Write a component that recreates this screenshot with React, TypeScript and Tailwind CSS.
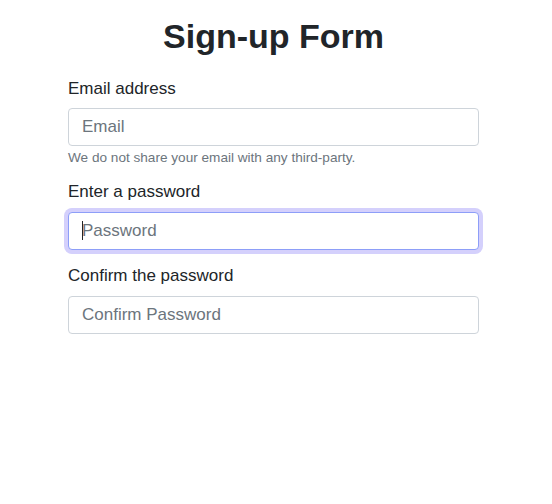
export default function App() {
  const font = { fontFamily: '"Liberation Sans", Arial, sans-serif' };

  return (
    <div className="min-h-screen bg-white text-[#212529]" style={font}>
      <form className="ml-[68px] w-[411px] pt-4" onSubmit={(e) => e.preventDefault()}>
        <h1 className="text-center text-[34px] font-bold leading-[40px] text-[#212529]">
          Sign-up Form
        </h1>

        <label htmlFor="email" className="mt-[21px] block text-[17px] leading-[24px]">
          Email address
        </label>
        <input
          id="email"
          type="email"
          placeholder="Email"
          className="mt-[7px] block h-[38px] w-full rounded border border-[#ced4da] bg-white px-[13px] text-[17px] text-[#212529] placeholder:text-[#6c757d] focus:outline-none"
        />
        <p className="mt-[3px] text-[13.6px] leading-[18px] text-[#6c757d]">
          We do not share your email with any third-party.
        </p>

        <label htmlFor="password" className="mt-[13px] block text-[17px] leading-[24px]">
          Enter a password
        </label>
        <div className="relative mt-2">
          <input
            id="password"
            type="password"
            placeholder="Password"
            className="block h-[38px] w-full rounded border border-[#8d9ef8] bg-white px-[13px] text-[17px] text-[#212529] shadow-[0_0_0_4px_#d4d0fc] placeholder:text-[#6c757d] focus:outline-none"
          />
          <span className="pointer-events-none absolute left-[14px] top-[9px] h-[19px] w-px bg-[#212529]" />
        </div>

        <label htmlFor="confirm" className="mt-[14px] block text-[17px] leading-[24px]">
          Confirm the password
        </label>
        <input
          id="confirm"
          type="password"
          placeholder="Confirm Password"
          className="mt-2 block h-[38px] w-full rounded border border-[#ced4da] bg-white px-[13px] text-[17px] text-[#212529] placeholder:text-[#6c757d] focus:outline-none"
        />
      </form>
    </div>
  );
}
